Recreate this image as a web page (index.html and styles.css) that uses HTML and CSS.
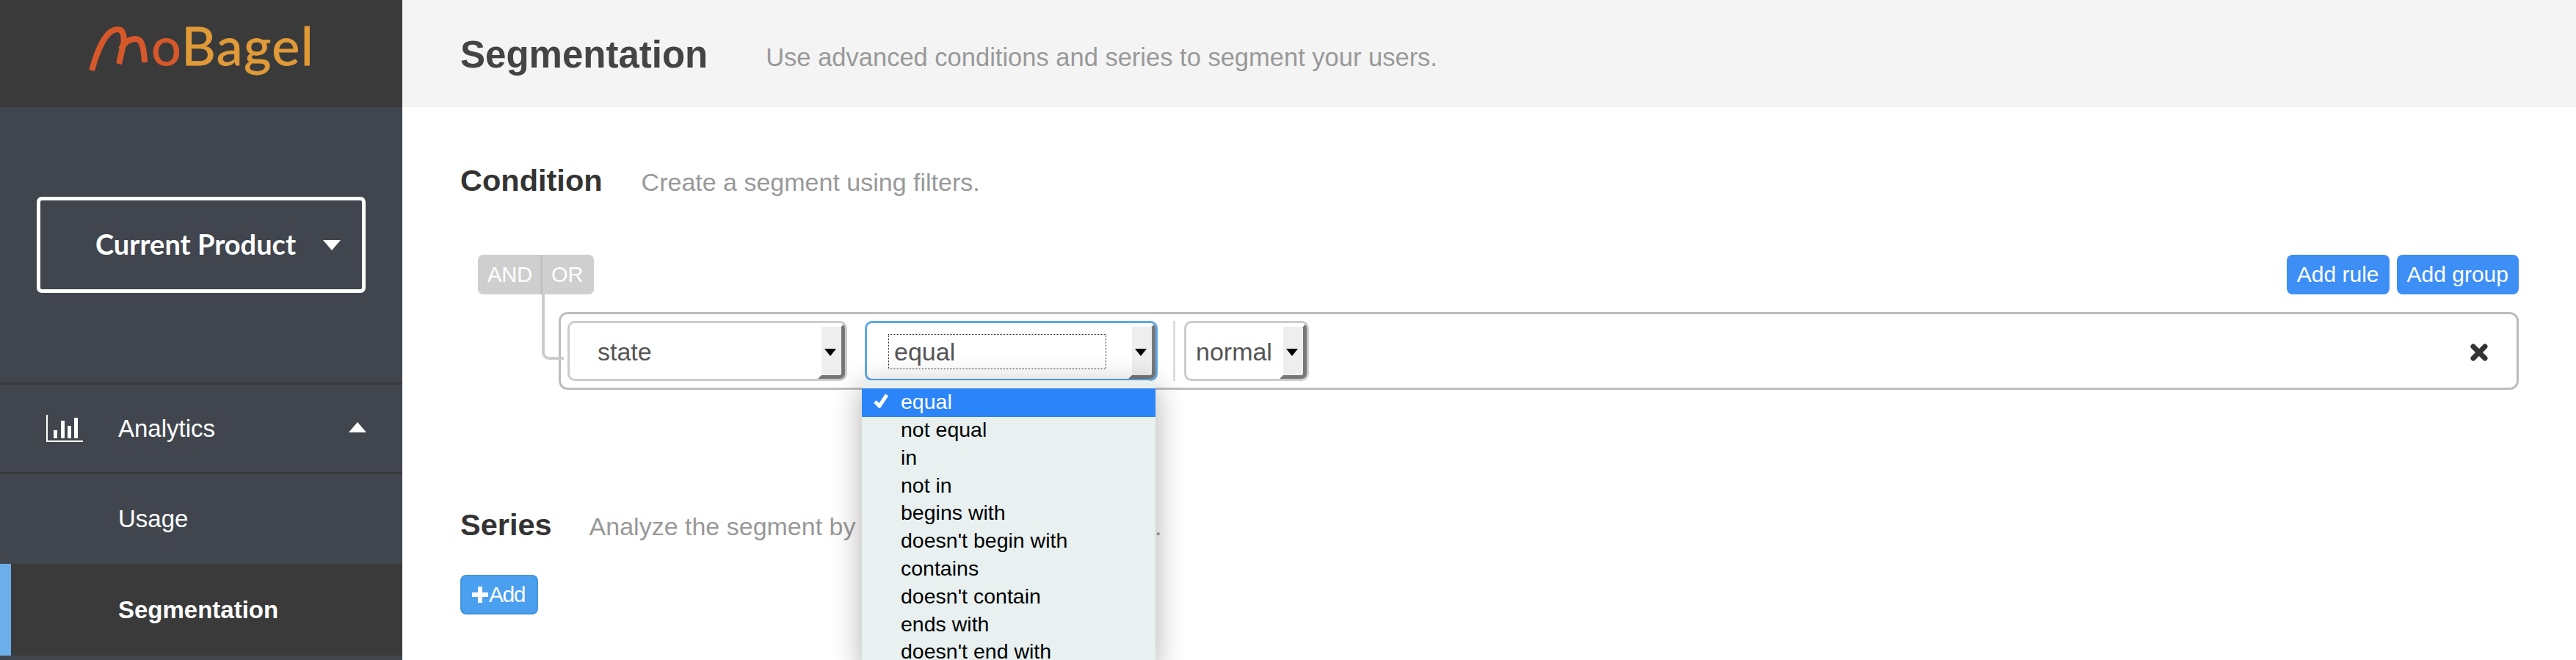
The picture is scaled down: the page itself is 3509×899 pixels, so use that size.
FILE: index.html
```html
<!DOCTYPE html>
<html lang="en">
<head>
    <meta charset="UTF-8">
    <title>Segmentation</title>
    <link rel="stylesheet" href="styles.css">
</head>
<body>
    <div class="app">
        <aside class="sidebar">
            <div class="brand">
                <svg class="brand-mark" width="88" height="70" viewBox="0 0 88 70">
                    <path d="M5 64 C12 38 24 8 40 8 C50 8 50 24 47 33 L42 55" fill="none" stroke="#d6582a" stroke-width="8"/>
                    <path d="M45 35 C50 24 58 21 65 21 C74 21 76 34 77 53" fill="none" stroke="#d6582a" stroke-width="8"/>
                </svg>
                <div class="brand-name"><span class="brand-o">o</span>Bagel</div>
            </div>
            <div class="product">
                <div class="product-btn">
                    <span class="product-name">Current Product</span>
                    <i class="caret-down"></i>
                </div>
            </div>
            <nav class="menu">
                <div class="menu-item menu-head">
                    <svg class="menu-icon" width="50" height="37" viewBox="0 0 50 37">
                        <path d="M1 0V36H50" fill="none" stroke="#fff" stroke-width="2"/>
                        <rect x="10" y="21" width="5" height="11" fill="#fff"/>
                        <rect x="20" y="8" width="5" height="24" fill="#fff"/>
                        <rect x="29" y="15" width="5" height="17" fill="#fff"/>
                        <rect x="38" y="4" width="5" height="28" fill="#fff"/>
                    </svg>
                    <span>Analytics</span>
                    <i class="caret-up"></i>
                </div>
                <div class="menu-item menu-sub">Usage</div>
                <div class="menu-item menu-active">Segmentation</div>
            </nav>
        </aside>

        <main class="main">
            <header class="topbar">
                <h1>Segmentation</h1>
                <p>Use advanced conditions and series to segment your users.</p>
            </header>

            <section class="condition">
                <div class="section-title">
                    <h2>Condition</h2>
                    <p>Create a segment using filters.</p>
                </div>
                <div class="tree">
                    <div class="tree-head">
                        <div class="and-or">
                            <span class="and">AND</span>
                            <span class="or">OR</span>
                        </div>
                        <div class="tree-actions">
                            <button class="btn">Add rule</button>
                            <button class="btn">Add group</button>
                        </div>
                    </div>
                    <div class="rule">
                        <div class="select select-field">
                            <span class="select-text">state</span>
                            <span class="select-arrow"></span>
                        </div>
                        <div class="select select-op">
                            <span class="select-focus">equal</span>
                            <span class="select-arrow"></span>
                            <ul class="dropdown">
                                <li class="selected">
                                    <svg class="check" width="20" height="20" viewBox="0 0 20 20">
                                        <path d="M2 11L8 17L18 2" fill="none" stroke="#fff" stroke-width="5"/>
                                    </svg>
                                    equal
                                </li>
                                <li>not equal</li>
                                <li>in</li>
                                <li>not in</li>
                                <li>begins with</li>
                                <li>doesn't begin with</li>
                                <li>contains</li>
                                <li>doesn't contain</li>
                                <li>ends with</li>
                                <li>doesn't end with</li>
                            </ul>
                        </div>
                        <span class="rule-divider"></span>
                        <div class="select select-value">
                            <span class="select-text">normal</span>
                            <span class="select-arrow"></span>
                        </div>
                        <svg class="rule-remove" width="24" height="24" viewBox="0 0 24 24">
                            <path d="M4 4L20 20M20 4L4 20" fill="none" stroke="#333" stroke-width="7" stroke-linecap="round"/>
                        </svg>
                    </div>
                </div>
            </section>

            <section class="series">
                <div class="section-title">
                    <h2>Series</h2>
                    <p>Analyze the segment by selecting different features.</p>
                </div>
                <button class="btn btn-add">
                    <svg width="24" height="24" viewBox="0 0 24 24">
                        <path d="M12 1V23M1 12H23" fill="none" stroke="#fff" stroke-width="6"/>
                    </svg>Add
                </button>
            </section>
        </main>
    </div>
</body>
</html>
```

FILE: styles.css
```css
* {
    box-sizing: border-box;
}
body {
    margin: 0;
    font-family: "Liberation Sans", Arial, sans-serif;
    overflow: hidden;
}
.app {
    display: flex;
    height: 899px;
    overflow: hidden;
}

/* sidebar */
.sidebar {
    width: 548px;
    flex: none;
    background-color: #41464e;
    color: #fff;
}
.brand {
    height: 146px;
    background-color: #3a3a3a;
    display: flex;
    align-items: flex-start;
    padding: 32px 0 0 120px;
}
.brand-mark {
    flex: none;
}
.brand-name {
    margin: -13px 0 0 -2px;
    font-family: Lato, sans-serif;
    font-size: 72px;
    line-height: 85px;
    letter-spacing: 1.5px;
    -webkit-text-stroke: 0.8px #e19a38;
    color: #e19a38;
    white-space: nowrap;
}
.brand-o {
    color: #d6582a;
    -webkit-text-stroke-color: #d6582a;
}
.product {
    height: 375px;
    display: flex;
    align-items: center;
    justify-content: center;
}
.product-btn {
    width: 448px;
    height: 131px;
    border: 5px solid #fff;
    border-radius: 7px;
    padding: 0 29px 0 75px;
    display: flex;
    align-items: center;
    justify-content: space-between;
    font-family: Lato, sans-serif;
    font-size: 38px;
    font-weight: 700;
}
.product-name {
    margin-bottom: 4px;
}
.caret-down {
    border-left: 12px solid transparent;
    border-right: 12px solid transparent;
    border-top: 14px solid #fff;
}
.caret-up {
    margin-left: auto;
    margin-bottom: 4px;
    border-left: 12px solid transparent;
    border-right: 12px solid transparent;
    border-bottom: 14px solid #fff;
}
.menu-item {
    display: flex;
    align-items: center;
    font-size: 33px;
    padding-left: 161px;
}
.menu-head {
    height: 125px;
    border-top: 3px solid #3a3a3a;
    border-bottom: 3px solid #3a3a3a;
    padding: 0 49px 0 63px;
}
.menu-icon {
    margin-right: 48px;
}
.menu-sub {
    height: 122px;
}
.menu-active {
    height: 125px;
    font-weight: 700;
    background-color: #3a3a3a;
    border-left: 15px solid #6aaeea;
    padding-left: 146px;
}

/* content */
.main {
    flex: 1;
    min-width: 0;
    background-color: #fff;
}
.topbar {
    height: 146px;
    background-color: #f4f4f4;
    padding: 2px 0 0 79px;
    display: flex;
    align-items: center;
}
.topbar h1 {
    margin: 0 79px 0 0;
    font-size: 51px;
    font-weight: 700;
    color: #444;
}
.topbar p {
    margin: 8px 0 0;
    font-size: 34.5px;
    color: #999;
}
.condition {
    padding: 70px 78px 0 79px;
}
.section-title {
    display: flex;
    align-items: baseline;
}
.section-title h2 {
    margin: 0;
    font-size: 41.5px;
    font-weight: 700;
    line-height: 60px;
    color: #333;
}
.section-title p {
    margin: 0 0 0 53px;
    font-size: 34px;
    color: #999;
}
.tree {
    padding: 71px 0 0 24px;
}
.tree-head {
    display: flex;
    justify-content: space-between;
}
.and-or {
    width: 158px;
    height: 54px;
    display: flex;
    background-color: #cfcfcf;
    border-radius: 7px;
    color: #fff;
    font-size: 29px;
    line-height: 54px;
    overflow: hidden;
}
.and {
    width: 88px;
    padding-left: 13px;
    border-right: 3px solid #c0c0c0;
}
.or {
    padding-left: 12px;
}
.tree-actions {
    display: flex;
    gap: 10px;
}
.btn {
    height: 54px;
    padding: 0 14px;
    border: 0;
    border-radius: 8px;
    background-color: #3d8ff5;
    color: #fff;
    font-family: inherit;
    font-size: 30px;
}
.rule {
    position: relative;
    margin: 24px 0 0 110px;
    height: 106px;
    border: 3px solid #bdbdbd;
    border-radius: 12px;
    padding: 9px;
    display: flex;
}
/* line from AND/OR down to the rule */
.rule::before {
    content: "";
    position: absolute;
    left: -26px;
    top: -27px;
    width: 26px;
    height: 85px;
    border-left: 4px solid #ccc;
    border-bottom: 4px solid #ccc;
    border-bottom-left-radius: 10px;
}
.select {
    position: relative;
    height: 82px;
    border: 3px solid #ccc;
    border-radius: 10px;
    padding-top: 2px;
    font-size: 34px;
    color: #555;
    display: flex;
    align-items: center;
}
.select-field {
    width: 381px;
    padding-left: 38px;
}
.select-op {
    width: 399px;
    margin-left: 24px;
    border-color: #5fa8e8;
    padding-left: 29px;
}
.select-value {
    width: 170px;
    padding-left: 13px;
}
.select-arrow {
    position: absolute;
    right: 0;
    top: 0;
    width: 37px;
    height: 76px;
    background-color: #eee;
    background-clip: padding-box;
    border-top: 5px solid transparent;
    border-right: 5px solid #777;
    border-bottom: 5px solid #777;
    border-left: 5px solid transparent;
    border-radius: 0 7px 7px 0;
}
.select-arrow::after {
    content: "";
    position: absolute;
    left: 4px;
    top: 30px;
    border-left: 8px solid transparent;
    border-right: 8px solid transparent;
    border-top: 10px solid #000;
}
.select-focus {
    width: 297px;
    height: 48px;
    line-height: 46px;
    padding-left: 7px;
    border: 1px dotted #222;
}
.rule-divider {
    width: 3px;
    height: 82px;
    margin: 0 12px 0 21px;
    background-color: #ddd;
}
.rule-remove {
    margin: 31px 0 0 auto;
    position: relative;
    left: -30px;
}
.dropdown {
    position: absolute;
    z-index: 5;
    left: -7px;
    top: 78px;
    width: 400px;
    margin: 0;
    padding: 11px 0 0;
    list-style: none;
    background-color: #e8f0f0;
    border-radius: 10px 10px 0 0;
    box-shadow: 0 8px 40px rgba(0, 0, 0, 0.32);
    font-size: 28.5px;
    color: #000;
}
.dropdown li {
    position: relative;
    height: 37.8px;
    line-height: 35.5px;
    padding-left: 53px;
}
.dropdown .selected {
    height: 39px;
    line-height: 37px;
    background-color: #2b84f8;
    color: #fff;
}
.check {
    position: absolute;
    left: 16px;
    top: 7px;
}
.series {
    padding: 154px 0 0 79px;
}
.series .section-title p {
    margin-left: 51px;
}
.btn-add {
    display: flex;
    align-items: center;
    height: 54px;
    width: 106px;
    margin-top: 38px;
    padding: 0 0 0 13px;
    background-color: #4a9fef;
    border: 2px solid #4493e0;
    font-size: 30px;
    letter-spacing: -1.5px;
}
```
